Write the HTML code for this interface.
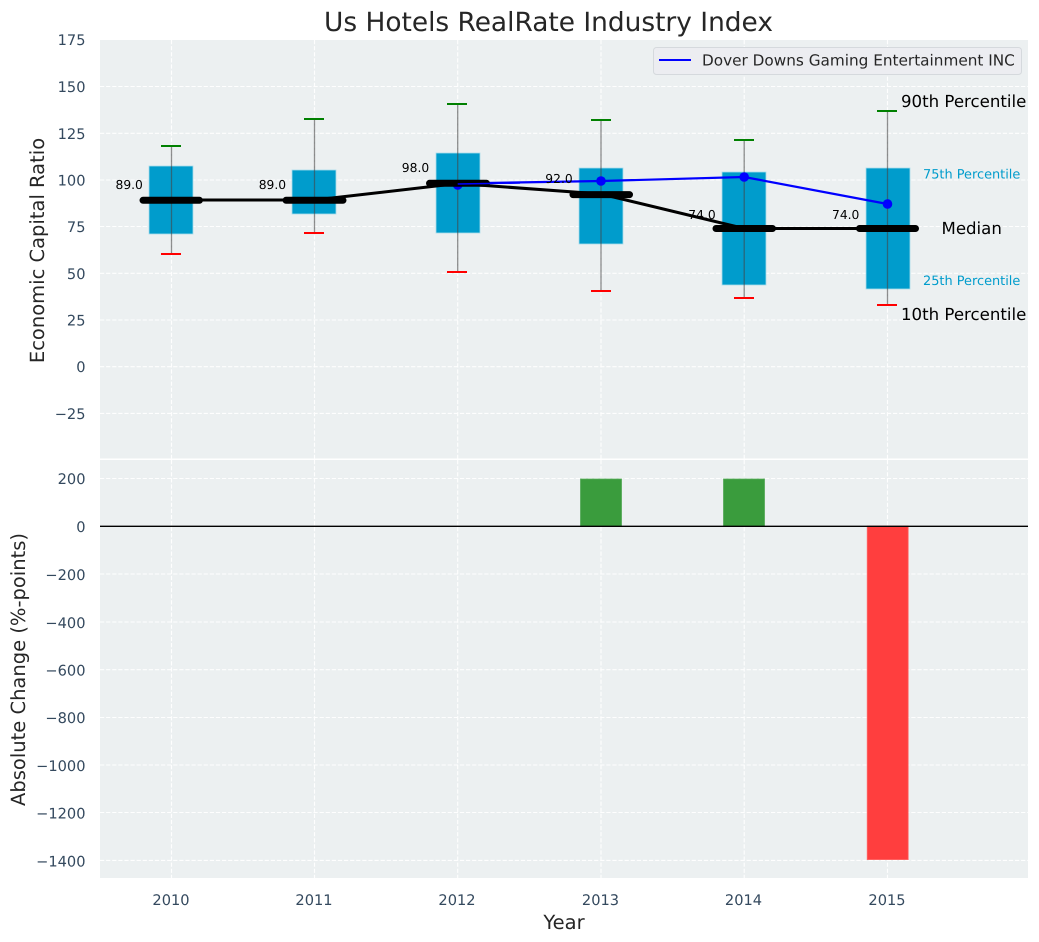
<!DOCTYPE html>
<html>
<head>
<meta charset="utf-8">
<style>
html,body{margin:0;padding:0;background:#fff;width:1039px;height:942px;overflow:hidden}
svg{display:block}
text{font-family:"DejaVu Sans","Liberation Sans",sans-serif;text-rendering:geometricPrecision}
.t{font-size:14.6px;fill:#34495e}
.l{font-size:12.3px;fill:#000}
.p{font-size:16.6px;fill:#000}
.c{font-size:12.9px;fill:#009ccc}
.a{font-size:19.5px;fill:#262626}
</style>
</head>
<body>
<svg width="1039" height="942" viewBox="0 0 1039 942" xmlns="http://www.w3.org/2000/svg">
<text x="548.5" y="31" font-size="26.4" fill="#262626" text-anchor="middle">Us Hotels RealRate Industry Index</text>

<rect x="100" y="40" width="928" height="418.5" fill="#ecf0f1"/>
<rect x="100" y="460" width="928" height="418" fill="#ecf0f1"/>

<g stroke="#fff" stroke-width="1.1" stroke-dasharray="4.2 1.9" fill="none" opacity=".95">
<path d="M100 86.5H1028M100 133.3H1028M100 180H1028M100 226.5H1028M100 273.3H1028M100 320H1028M100 366.7H1028M100 413.4H1028"/>
<path d="M171.5 40V458.5M314.5 40V458.5M457.7 40V458.5M601 40V458.5M744.2 40V458.5M887.5 40V458.5"/>
<path d="M100 478.5H1028M100 574H1028M100 622H1028M100 669.7H1028M100 717.5H1028M100 765H1028M100 812.5H1028M100 860.4H1028"/>
<path d="M171.5 460V878M314.5 460V878M457.7 460V878M601 460V878M744.2 460V878M887.5 460V878"/>
</g>

<g fill="#009ccc" stroke="#a9dcec" stroke-width=".8">
<rect x="149" y="166" width="44" height="68"/>
<rect x="292" y="170" width="44" height="44"/>
<rect x="436" y="153" width="44" height="80"/>
<rect x="579" y="168" width="44" height="76"/>
<rect x="722" y="172" width="44" height="113"/>
<rect x="866" y="168" width="44" height="121"/>
</g>

<path d="M171.5 146V254M314.5 119V233M457.7 104V272M601 120V291M744.2 140V298M887.5 111V305" stroke="#444" stroke-opacity=".6" stroke-width="1.3" fill="none"/>
<g stroke="#008000" stroke-width="2" fill="none"><path d="M161 146H181M304 119H324M447 104H467M591 120H611M734 140H754M877 111H897"/></g>
<g stroke="#ff0000" stroke-width="2" fill="none"><path d="M161 254H181M304 233H324M447 272H467M591 291H611M734 298H754M877 305H897"/></g>

<path d="M457.7 183.5L601 181L744.2 177L887.5 204" stroke="#0000ff" stroke-width="2.2" fill="none"/>
<g fill="#0000ff"><circle cx="457.7" cy="185" r="4.8"/><circle cx="601" cy="181" r="4.8"/><circle cx="744.2" cy="177" r="4.8"/><circle cx="887.5" cy="204" r="4.8"/></g>

<path d="M171.5 200H314.5L457.7 183.5L601 194L744.2 228.5H887.5" stroke="#000" stroke-width="3" fill="none"/>
<g stroke="#000" stroke-width="7" stroke-linecap="round" fill="none">
<path d="M143 200.3H199.5M286 200.3H343M429.5 183.3H486.5M573 194.6H629.5M716 228.5H772.5M859.5 228.5H915.5"/>
</g>
<path d="M457.7 184L520 183" stroke="#0000ff" stroke-width="1.5" fill="none"/>

<text class="l" x="115.5" y="189">89.0</text>
<text class="l" x="258.7" y="189">89.0</text>
<text class="l" x="401.8" y="172">98.0</text>
<text class="l" x="545.3" y="183">92.0</text>
<text class="l" x="688.3" y="219">74.0</text>
<text class="l" x="832" y="219">74.0</text>

<text class="p" x="901" y="107">90th Percentile</text>
<text class="p" x="901" y="320">10th Percentile</text>
<text class="p" x="941.5" y="234">Median</text>
<text class="c" x="923" y="178.5">75th Percentile</text>
<text class="c" x="923" y="285">25th Percentile</text>

<rect x="653.5" y="47.5" width="368" height="27" rx="3" fill="#ecedf1" stroke="#d5d9dd" stroke-width="1"/>
<path d="M659 60H691" stroke="#0000ff" stroke-width="2"/>
<text x="702" y="65.5" font-size="15.27" fill="#262626">Dover Downs Gaming Entertainment INC</text>

<rect x="580.5" y="479" width="41" height="47" fill="#3a9c3d" stroke="#54a957" stroke-width=".8"/>
<rect x="723.5" y="479" width="41" height="47" fill="#3a9c3d" stroke="#54a957" stroke-width=".8"/>
<rect x="867.2" y="526" width="41" height="333.6" fill="#ff3e3e" stroke="#ff6a6a" stroke-width=".8"/>
<path d="M100 526.3H1028" stroke="#000" stroke-width="1.3"/>

<g text-anchor="end">
<text class="t" x="85.5" y="45">175</text>
<text class="t" x="85.5" y="92">150</text>
<text class="t" x="85.5" y="139">125</text>
<text class="t" x="85.5" y="185.5">100</text>
<text class="t" x="85.5" y="232">75</text>
<text class="t" x="85.5" y="279">50</text>
<text class="t" x="85.5" y="325.5">25</text>
<text class="t" x="85.5" y="372">0</text>
<text class="t" x="85.5" y="419">−25</text>
<text class="t" x="85.5" y="484">200</text>
<text class="t" x="85.5" y="532">0</text>
<text class="t" x="85.5" y="580">−200</text>
<text class="t" x="85.5" y="628">−400</text>
<text class="t" x="85.5" y="675.5">−600</text>
<text class="t" x="85.5" y="723">−800</text>
<text class="t" x="85.5" y="771">−1000</text>
<text class="t" x="85.5" y="818.5">−1200</text>
<text class="t" x="85.5" y="866.5">−1400</text>
</g>
<g text-anchor="middle">
<text class="t" x="171" y="905">2010</text>
<text class="t" x="314" y="905">2011</text>
<text class="t" x="457" y="905">2012</text>
<text class="t" x="600.5" y="905">2013</text>
<text class="t" x="743.5" y="905">2014</text>
<text class="t" x="887" y="905">2015</text>
</g>

<text class="a" x="564" y="929" text-anchor="middle">Year</text>
<text class="a" transform="translate(44 250.5) rotate(-90)" text-anchor="middle">Economic Capital Ratio</text>
<text class="a" transform="translate(25 669.5) rotate(-90)" text-anchor="middle">Absolute Change (%-points)</text>
</svg>
</body>
</html>
